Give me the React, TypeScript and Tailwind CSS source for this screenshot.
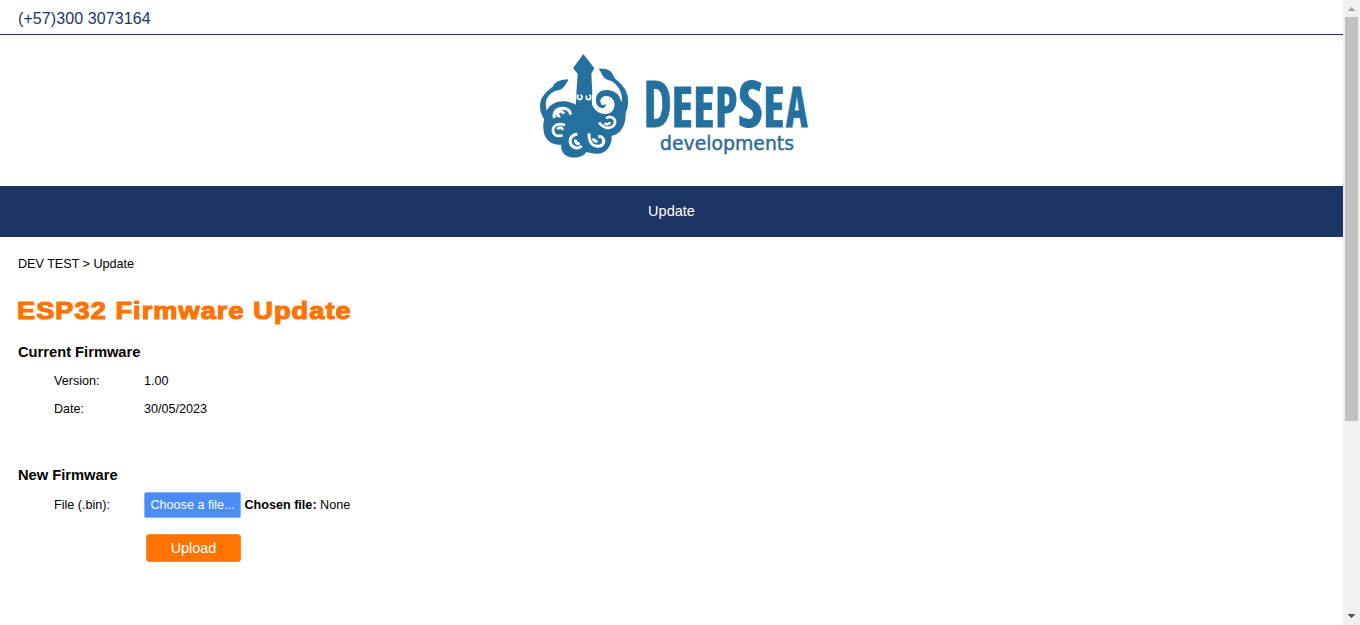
function Logo() {
  return (
    <svg width="290" height="125" viewBox="0 0 290 125" overflow="visible" role="img" aria-label="DeepSea developments">
      <g transform="scale(.33333)" fill="#24709f" stroke="none">
        <path d="M160 27 L193 70 L184 86 L187 147 L187 182 L137 182 L139 145 L143 86 L129 70 Z" />
        <g stroke="#24709f" strokeWidth="5" strokeLinejoin="round">
          <path d="M45 222 C29 199 29 171 41 155 C50 141 62 133 70 127 C74 114 88 106 112 105 C106 115 101 126 91 131 C83 135 77 133 71 137 C47 150 38 174 51 205 Z" />
          <path d="M210 73 C226 73 240 78 246 88 C249 94 250 99 255 104 C278 121 293 145 292 171 C291 190 287 204 277 212 L270 181 C287 164 277 129 248 107 C242 103 236 105 229 100 C218 94 217 82 210 73 Z" />
        </g>
        <path d="M48 212 C48 181 79 165 106 169 C122 171 133 178 141 181 L187 180 C193 195 208 206 226 207 C246 207 256 190 253 174 C250 158 235 151 223 154 C211 158 208 170 215 177 C219 182 224 180 227 176 C230 188 215 193 207 186 C195 178 194 152 208 142 C225 129 257 136 268 155 C273 164 275 174 273 183 C286 192 289 207 286 221 C283 250 266 269 245 272 C247 299 231 324 204 326 C190 327 177 323 169 321 C160 336 137 341 119 336 C100 331 91 315 94 299 C65 302 43 283 41 257 C38 241 40 224 48 212 Z" />
        <g fill="none" stroke="#fff" strokeWidth="9" strokeLinejoin="round">
          <path d="M73 219 C69 199 83 188 101 190 C115 192 121 199 122 209 M102 206 C97 197 86 196 83 204 C80 210 84 214 91 213" />
          <path d="M105 241 C88 233 69 240 69 256 C69 269 80 276 98 271 M99 255 C96 246 87 246 82 253" strokeWidth="8" />
          <path d="M142 268 C125 269 117 282 122 296 C127 309 145 313 155 303 M149 294 C142 298 135 293 137 284" />
          <path d="M177 265 C176 289 186 303 202 304 C217 304 224 294 220 283 C217 275 212 273 205 276 M190 280 C191 288 197 290 202 287" />
          <path d="M207 233 C218 247 235 253 247 245 C258 237 258 224 247 218 C239 214 232 216 229 221 M224 234 C229 240 237 239 240 232" strokeWidth="8" />
        </g>
        <g fill="none" stroke="#fff">
          <path strokeWidth="5" d="M145 149 C140 157 144 164 150 164 C158 163 158 151 151 150 M171 152 C166 157 169 164 175 164 C184 162 184 152 178 149" />
          <path strokeWidth="4" d="M137 145 L137 164 M189 145 L189 163" />
          <path strokeWidth="7" d="M197 137 C187 149 188 168 191 181 C199 195 213 203 228 202 C242 200 250 188 249 175 C246 162 235 156 224 159 C215 162 213 172 218 178" />
        </g>
      </g>
      <g fill="#24709f" stroke="#24709f" strokeWidth=".8" fontFamily="Open Sans, sans-serif" fontWeight="700" className="[font-stretch:75%]">
        <text x="113.5" y="82" fontSize="64.5" textLength="28.5" lengthAdjust="spacingAndGlyphs">D</text>
        <text x="141.5" y="82" fontSize="55" textLength="21.5" lengthAdjust="spacingAndGlyphs">E</text>
        <text x="163" y="82" fontSize="55" textLength="21.5" lengthAdjust="spacingAndGlyphs">E</text>
        <text x="185" y="82" fontSize="55" textLength="22.5" lengthAdjust="spacingAndGlyphs">P</text>
        <text x="208" y="82" fontSize="64.5" textLength="25" lengthAdjust="spacingAndGlyphs">S</text>
        <text x="233" y="82" fontSize="55" textLength="21.5" lengthAdjust="spacingAndGlyphs">E</text>
        <text x="256" y="82" fontSize="55" textLength="21.5" lengthAdjust="spacingAndGlyphs">A</text>
      </g>
      <text x="130" y="105" fill="#326f98" stroke="#326f98" strokeWidth=".5" fontFamily="DejaVu Sans, sans-serif" fontSize="19.5" textLength="134" lengthAdjust="spacingAndGlyphs">developments</text>
    </svg>
  );
}

function Scrollbar() {
  return (
    <div className="flex h-full w-[17px] shrink-0 flex-col items-center justify-between bg-[#f0f0f0]">
      <div className="flex w-full flex-col items-center">
        <svg className="h-[17px] w-[17px]" viewBox="0 0 17 17" shapeRendering="crispEdges"><path fill="#a3a3a3" d="M8 7h1v1h1v1h1v1h1v1H5v-1h1V9h1V8h1z" /></svg>
        <div className="h-[404px] w-[13px] bg-[#c1c1c1]" />
      </div>
      <svg className="h-[17px] w-[17px]" viewBox="0 0 17 17" shapeRendering="crispEdges"><path fill="#505050" d="M5 6h7v1h-1v1h-1v1H9v1H8V9H7V8H6V7H5z" /></svg>
    </div>
  );
}

export default function App() {
  return (
    <div className="flex h-[625px] w-full overflow-hidden bg-white font-['Liberation_Sans',sans-serif] text-black">
      <div className="flex min-w-0 flex-1 flex-col">
        <header className="h-[35px] border-b border-[#1d3564] pt-[7px] pl-[18px] text-base leading-6 tracking-[0.1px] text-[#1d3564]">(+57)300 3073164</header>
        <div className="h-[151px] pt-[10px] pl-[530px]"><Logo /></div>
        <nav className="flex h-[51px] items-center justify-center bg-[#1d3564] text-[14.5px] text-white">Update</nav>
        <main className="flex flex-col pl-[18px] text-[12.6px]">
          <div className="mt-[17px] h-5 leading-5">DEV TEST &gt; Update</div>
          <h1 className="mt-[18px] -ml-px h-9 w-max origin-left scale-x-[1.105] whitespace-nowrap pt-px text-[24.5px] font-bold leading-9 tracking-[1px] text-[#ff7300] [-webkit-text-stroke:1.2px_#ff7300]">ESP32 Firmware Update</h1>
          <h2 className="mt-[14px] h-5 text-[14.7px] font-bold leading-5">Current Firmware</h2>
          <dl className="mt-[9px] grid grid-cols-[90px_1fr] gap-y-2 pl-9 leading-5">
            <dt>Version:</dt><dd>1.00</dd>
            <dt>Date:</dt><dd>30/05/2023</dd>
          </dl>
          <h2 className="mt-[46px] h-5 text-[14.7px] font-bold leading-5">New Firmware</h2>
          <div className="mt-[7px] flex h-[26px] items-center pl-9">
            <span className="w-[90px]">File (.bin):</span>
            <button className="h-[26px] w-[97px] whitespace-nowrap rounded-[2px] border border-[#86b3fa] bg-[#4c8df5] text-white">Choose a file...</button>
            <span className="ml-[3.5px]"><b>Chosen file:</b> None</span>
          </div>
          <button className="mt-4 ml-32 h-7 w-[95px] rounded-[3px] border border-[#ff8d2f] bg-[#ff7300] pt-px text-[14.4px] text-white">Upload</button>
        </main>
      </div>
      <Scrollbar />
    </div>
  );
}
